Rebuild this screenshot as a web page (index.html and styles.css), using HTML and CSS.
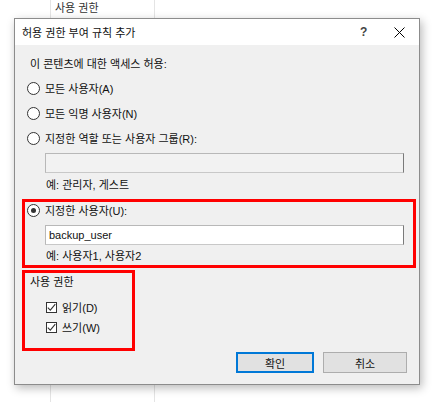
FILE: index.html
```html
<!DOCTYPE html>
<html lang="ko">
<head>
    <meta charset="UTF-8">
    <title>허용 권한 부여 규칙 추가</title>
    <link rel="stylesheet" href="styles.css">
</head>
<body>
    <div class="grid-head">
        <span class="col-label">사용 권한</span>
    </div>
    <div class="dialog">
        <div class="titlebar">
            <span class="title">허용 권한 부여 규칙 추가</span>
            <span class="help">?</span>
            <span class="close">
                <svg width="11" height="11" viewBox="0 0 11 11"><path d="M0.5 0.5L10.5 10.5M10.5 0.5L0.5 10.5" stroke="#000" stroke-width="1" fill="none"/></svg>
            </span>
        </div>
        <div class="content">
            <p class="intro">이 콘텐츠에 대한 액세스 허용:</p>
            <div class="radio"><span class="circle"></span>모든 사용자(A)</div>
            <div class="radio gap"><span class="circle"></span>모든 익명 사용자(N)</div>
            <div class="radio gap"><span class="circle"></span>지정한 역할 또는 사용자 그룹(R):</div>
            <div class="field disabled"></div>
            <p class="hint">예: 관리자, 게스트</p>

            <div class="mark mark-user">
                <div class="radio first"><span class="circle checked"></span>지정한 사용자(U):</div>
                <div class="field">backup_user</div>
                <p class="hint">예: 사용자1, 사용자2</p>
            </div>

            <div class="mark mark-perm">
                <p class="group-title">사용 권한</p>
                <div class="check"><span class="box"><svg width="9" height="9" viewBox="0 0 9 9"><path d="M0.8 4.6L3.3 7.1L8.3 1.2" stroke="#333" stroke-width="1.1" fill="none"/></svg></span>읽기(D)</div>
                <div class="check second"><span class="box"><svg width="9" height="9" viewBox="0 0 9 9"><path d="M0.8 4.6L3.3 7.1L8.3 1.2" stroke="#333" stroke-width="1.1" fill="none"/></svg></span>쓰기(W)</div>
            </div>

            <div class="buttons">
                <button class="btn ok">확인</button>
                <button class="btn cancel">취소</button>
            </div>
        </div>
    </div>
</body>
</html>
```

FILE: styles.css
```css
*{
    margin: 0;
    padding: 0;
    box-sizing: border-box;
}
body{
    width: 432px;
    height: 402px;
    overflow: hidden;
    font-family: "Liberation Sans", "Noto Sans CJK KR", sans-serif;
    font-size: 11px;
    color: #111;
    background: #fff linear-gradient(to right, transparent 50px, #e4e4e4 50px, #e4e4e4 51px, transparent 51px, transparent 154px, #e4e4e4 154px, #e4e4e4 155px, transparent 155px);
}
.grid-head{
    height: 18px;
    padding-left: 55px;
    line-height: 16px;
}
.col-label{
    color: #333;
}
.dialog{
    margin-left: 14px;
    width: 406px;
    height: 367px;
    border: 1px solid #8c8c8c;
    background: #f0f0f0;
    box-shadow: 2px 3px 9px rgba(0,0,0,0.28);
    display: flex;
    flex-direction: column;
}
.titlebar{
    height: 26px;
    background: #fff;
    display: flex;
    align-items: center;
    padding-left: 7px;
}
.title{
    flex: 1;
}
.help{
    width: 10px;
    margin-right: 24px;
    font-weight: bold;
    color: #444;
    font-size: 12px;
}
.close{
    width: 11px;
    height: 11px;
    margin-right: 14px;
    display: flex;
}
.content{
    flex: 1;
    padding-top: 10px;
}
.intro{
    margin-left: 15px;
    height: 18px;
    line-height: 18px;
}
.radio{
    display: flex;
    align-items: center;
    height: 18px;
    margin-top: 6px;
    margin-left: 12px;
}
.radio.gap{
    margin-top: 7px;
}
.circle{
    width: 13px;
    height: 13px;
    border: 1px solid #333;
    border-radius: 50%;
    background: #fff;
    margin-right: 5px;
    display: flex;
    align-items: center;
    justify-content: center;
}
.circle.checked::after{
    content: "";
    width: 5px;
    height: 5px;
    border-radius: 50%;
    background: #333;
}
.field{
    margin-top: 6px;
    margin-left: 30px;
    width: 359px;
    height: 20px;
    background: #fff;
    border: 1px solid #b8b8b8;
    border-right-color: #7a7a7a;
    border-bottom-color: #c8c8c8;
    padding-left: 3px;
    line-height: 18px;
    font-size: 11px;
}
.field.disabled{
    background: #f2f2f2;
}
.hint{
    margin-top: 3px;
    margin-left: 31px;
    height: 18px;
    line-height: 18px;
}
.mark{
    border: 3px solid #ff0000;
    margin-left: 7px;
}
.mark-user{
    margin-top: 5px;
    width: 394px;
}
.mark-user .radio.first{
    margin-top: 0;
    margin-left: 2px;
    height: 16px;
}
.mark-user .field{
    margin-top: 7px;
    margin-left: 20px;
}
.mark-user .hint{
    margin-top: 2px;
    margin-left: 21px;
}
.mark-perm{
    margin-top: 2px;
    width: 113px;
    padding-bottom: 12px;
}
.group-title{
    margin-left: 5px;
    height: 18px;
    line-height: 18px;
}
.check{
    display: flex;
    align-items: center;
    height: 18px;
    margin-top: 7px;
    margin-left: 21px;
}
.check.second{
    margin-top: 2px;
}
.box{
    width: 11px;
    height: 11px;
    border: 1px solid #333;
    background: #fff;
    margin-right: 5px;
    display: flex;
    align-items: center;
    justify-content: center;
}
.buttons{
    display: flex;
    justify-content: flex-end;
    gap: 9px;
    margin-top: 1px;
    padding-right: 12px;
}
.btn{
    height: 21px;
    font-family: inherit;
    font-size: 11px;
    background: #e1e1e1;
    border: 1px solid #adadad;
    color: #111;
}
.ok{
    width: 78px;
    border: 2px solid #0078d7;
}
.cancel{
    width: 84px;
}
```
